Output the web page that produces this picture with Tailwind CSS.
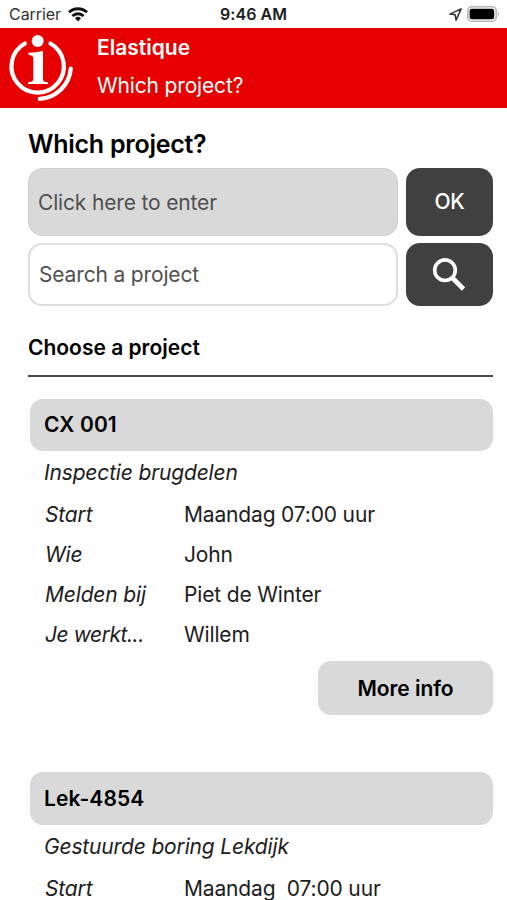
<!DOCTYPE html>
<html lang="en">
  <head>
    <meta charset="UTF-8" />
    <meta name="viewport" content="width=device-width, initial-scale=1.0" />
    <title>Elastique</title>
    <script src="https://cdn.jsdelivr.net/npm/@tailwindcss/browser@4"></script>
  </head>
  <body
    class="h-[900px] overflow-hidden bg-[#fefefe] font-['Inter','Liberation_Sans',sans-serif] text-[21px] leading-10 tracking-[-0.16px] text-[#1c1c1c]"
  >
    <!-- Status bar -->
    <div class="grid h-7 grid-cols-3 items-center px-[9px] text-base leading-7">
      <div class="flex items-center gap-[7px] text-[#333]">
        <span class="tracking-[-0.05px]">Carrier</span>
        <svg class="h-[15px] w-5" viewBox="0 0 20 15" fill="none" stroke="#111" stroke-width="2.9">
          <path d="M1 5.3a13 13 0 0 1 18 0" />
          <path d="M4.4 9a8.2 8.2 0 0 1 11.2 0" />
          <path d="M10 14.4l-3-3.1a4.3 4.3 0 0 1 6 0z" fill="#111" stroke="none" />
        </svg>
      </div>
      <div class="text-center font-semibold tracking-[0.05px]">9:46 AM</div>
      <div class="flex items-center justify-end gap-[5px]">
        <svg class="h-[13px] w-[13px]" viewBox="0 0 12 12" fill="none" stroke="#333" stroke-width="1.4" stroke-linejoin="round">
          <path d="M11.200 .8L.9 5.600l4.800.7.8 4.900z" />
        </svg>
        <svg class="-mr-[2px] h-4 w-[33px]" viewBox="0 0 33 16">
          <rect x=".8" y=".8" width="28.4" height="14.4" rx="4.2" fill="#fff" stroke="#b5b5b5" stroke-width="1.6" />
          <rect x="2.6" y="2.8" width="24.6" height="10.4" rx="2.2" fill="#000" />
          <path d="M31 5.5q2.2 2.5 0 5z" fill="#b5b5b5" />
        </svg>
      </div>
    </div>

    <!-- Header -->
    <header class="flex h-20 bg-[#e60000] text-white">
      <svg class="h-20 w-[97px] shrink-0" viewBox="0 0 97 80" fill="none" stroke="#fff" stroke-linecap="round">
        <circle cx="37.7" cy="13" r="6" fill="#fff" stroke="none" />
        <path d="M24.8 15.5A26.2 26.2 0 1 0 50.5 15.5" stroke-width="4.2" />
        <path d="M70.8 40.5A33 33 0 0 1 39.8 70.8" stroke-width="4.2" />
        <path d="M28.500 24.800Q36 24.800 43 23V51.500Q43 54 48 54.300V56H28V54.300Q33.300 54 33.300 51.500V30Q33.300 27.500 28.500 26.800Z" fill="#fff" stroke="none" />
      </svg>
      <div class="flex flex-col">
        <h1 class="h-[38px] font-semibold leading-[39px] tracking-normal">Elastique</h1>
        <p class="leading-[39px]">Which project?</p>
      </div>
    </header>

    <main class="pl-7 pr-[14px] pt-[18px]">
      <h2 class="h-[42px] text-[25px] font-semibold leading-[36px] tracking-[-0.26px] text-black">Which project?</h2>

      <div class="flex gap-2">
        <div class="flex h-[68px] w-[370px] items-center rounded-[14px] border border-[#cfcfcf] bg-[#d9d9d9] pl-[9px] pt-px text-[#505050]">
          Click here to enter
        </div>
        <button class="h-[68px] flex-1 rounded-[14px] bg-[#404040] font-medium text-white">OK</button>
      </div>

      <div class="mt-[7px] flex gap-2">
        <div class="flex h-[63px] w-[370px] items-center rounded-[14px] border-2 border-[#dedede] bg-white pl-[9px] pt-px text-[#505050]">
          Search a project
        </div>
        <button class="flex h-[63px] flex-1 items-center justify-center rounded-[14px] bg-[#404040] pb-[2px] pr-[2px]">
          <svg class="h-[34px] w-[34px]" viewBox="0 0 34 34" fill="none" stroke="#fff">
            <circle cx="13" cy="13.2" r="10.3" stroke-width="3.6" />
            <path d="M20.5 21L31.500 32" stroke-width="4.600" />
          </svg>
        </button>
      </div>

      <h3 class="mt-[22px] font-semibold tracking-normal text-black">Choose a project</h3>
      <div class="mt-[7px] h-[2px] bg-[#4a4a4a]"></div>

      <!-- Project 1 -->
      <section class="mt-[22px] pl-[2px]">
        <h4 class="h-[52px] rounded-[13px] bg-[#d9d9d9] pl-[14px] font-semibold leading-[52px] tracking-[0.1px] text-black">CX 001</h4>
        <p class="h-[44px] pl-[14px] italic leading-[43px]">Inspectie brugdelen</p>
        <dl class="grid grid-cols-[139px_1fr] pl-[15px]">
          <dt class="italic">Start</dt>
          <dd>Maandag 07:00 uur</dd>
          <dt class="italic">Wie</dt>
          <dd>John</dd>
          <dt class="italic">Melden bij</dt>
          <dd>Piet de Winter</dd>
          <dt class="italic tracking-[-0.45px]">Je werkt...</dt>
          <dd>Willem</dd>
        </dl>
        <button class="ml-auto mt-[6px] block h-[54px] w-[175px] rounded-[13px] bg-[#d9d9d9] pt-px font-semibold tracking-[-0.05px] text-black">More info</button>
      </section>

      <!-- Project 2 -->
      <section class="mt-[57px] pl-[2px]">
        <h4 class="h-[53px] rounded-[13px] bg-[#d9d9d9] pl-[14px] font-semibold leading-[53px] tracking-[0.1px] text-black">Lek-4854</h4>
        <p class="h-[44px] pl-[14px] italic leading-[43px]">Gestuurde boring Lekdijk</p>
        <dl class="grid grid-cols-[139px_1fr] pl-[15px]">
          <dt class="italic">Start</dt>
          <dd class="whitespace-pre">Maandag  07:00 uur</dd>
        </dl>
      </section>
    </main>
  </body>
</html>
